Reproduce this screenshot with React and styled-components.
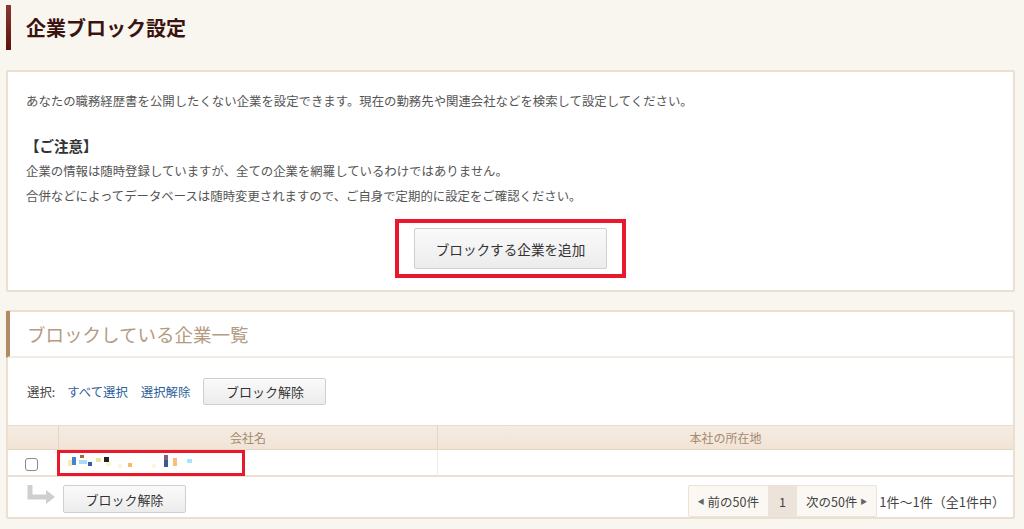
import React from 'react';
import styled, { createGlobalStyle } from 'styled-components';

const GlobalStyle = createGlobalStyle`
    body {
        margin: 0;
        background: #f9f6f0;
        font-family: "Noto Sans CJK JP", "Noto Sans", sans-serif;
        color: #555;
    }
`;

const Page = styled.div`
    padding: 5px 9px 0 6px;
    height: 529px;
    box-sizing: border-box;
    overflow: hidden;
`;

const Title = styled.h1`
    margin: 0;
    height: 45px;
    display: flex;
    align-items: center;
    padding-left: 15px;
    border-left: 5px solid #6e1d17;
    border-image: linear-gradient(#8a3a2e, #5a120e) 1;
    font-size: 20px;
    font-weight: bold;
    color: #3b1410;
`;

const Card = styled.section`
    background: #fff;
    border: 2px solid #eadfd0;
    border-radius: 2px;
    margin-top: ${props => props.top}px;
`;

const Intro = styled.div`
    padding: 17px 18px 12px;
    font-size: 12.4px;
    line-height: 25px;
`;

const Para = styled.p`
    margin: 0;
`;

const Notice = styled.h3`
    margin: 19px 0 0 -1px;
    font-size: 14.5px;
    font-weight: bold;
    color: #333;
    line-height: 26px;
`;

const Centered = styled.div`
    display: flex;
    justify-content: center;
    margin-top: 10px;
`;

const RedBox = styled.div`
    border: 4px solid #e8192c;
    padding: 5px 15px;
    display: flex;
    align-items: center;
`;

const Button = styled.button`
    font-family: inherit;
    font-size: ${props => props.size || 13}px;
    color: #333;
    background: linear-gradient(#fafafa, #ececec);
    border: 1px solid #cfcfcf;
    border-radius: 2px;
    width: ${props => props.w}px;
    height: ${props => props.h}px;
    padding: 0;
    cursor: pointer;
`;

const CardHead = styled.div`
    height: 45px;
    display: flex;
    align-items: center;
    padding-left: 17px;
    border-left: 4px solid #b08a60;
    margin-left: -2px;
    margin-top: -1px;
    border-bottom: 2px solid #f2ebe3;
    font-size: 18.5px;
    color: #b49b82;
`;

const Toolbar = styled.div`
    display: flex;
    align-items: center;
    gap: 13px;
    padding: 20px 19px 20px;
    font-size: 12.4px;
`;

const Label = styled.span`
    color: #444;
    margin-right: -1px;
`;

const Link = styled.a`
    color: #2d5f9a;
    text-decoration: none;
    cursor: pointer;
`;

const Table = styled.div`
    display: grid;
    grid-template-columns: 50px 379px 1fr;
    border-top: 1px solid #e9dccb;
`;

const HeadCell = styled.div`
    height: 23px;
    background: linear-gradient(#f5ece2, #f1e4d6);
    border-bottom: 1px solid #e6d7c4;
    border-left: ${props => (props.first ? 'none' : '1px solid #e6d7c4')};
    display: flex;
    align-items: center;
    justify-content: center;
    font-size: 12px;
    color: #a58a70;
`;

const Cell = styled.div`
    height: 25px;
    border-bottom: 2px solid #eadfd0;
    border-left: ${props => (props.first ? 'none' : '1px solid #f2ebe3')};
    display: flex;
    align-items: center;
    justify-content: ${props => (props.first ? 'center' : 'flex-start')};
    position: relative;
`;

const Check = styled.span`
    width: 11px;
    height: 11px;
    border: 1px solid #8a8a8a;
    border-radius: 3px;
    margin-left: -4px;
    margin-top: 3px;
`;

const Redacted = styled.div`
    position: absolute;
    left: -2px;
    top: 0;
    width: 182px;
    height: 20px;
    border: 3px solid #e8192c;
    display: flex;
    align-items: center;
`;

const Footer = styled.div`
    display: flex;
    align-items: flex-start;
    padding: 8px 0 0 19px;
    font-size: 12.5px;
`;

const Arrow = styled.svg`
    margin-top: -1px;
    margin-right: 6px;
`;

const Spacer = styled.div`
    flex: 1;
`;

const Pager = styled.div`
    display: flex;
    height: 30px;
    border: 1px solid #ece3d6;
    border-radius: 2px;
    background: #fbf8f3;
`;

const PageItem = styled.span`
    display: flex;
    align-items: center;
    gap: 3px;
    padding: 0 ${props => props.pad}px;
    background: ${props => (props.current ? '#ece4da' : 'transparent')};
    color: #444;
`;

const Tri = styled.span`
    font-size: 7px;
    color: #666;
`;

const Count = styled.span`
    margin: 7px 8px 0 2px;
    font-size: 13px;
    color: #444;
`;

const pixels = [
    [8, 8, 4, 6, '#fde7b4'], [12, 5, 4, 8, '#3d86d4'], [20, 3, 4, 3, '#a56a3a'],
    [19, 8, 8, 4, '#a8dcf7'], [28, 10, 4, 4, '#2b5fb0'], [36, 6, 5, 4, '#ece1a8'],
    [44, 5, 5, 5, '#222'], [46, 10, 5, 4, '#fef6d0'], [58, 12, 4, 4, '#fef6d6'],
    [68, 11, 4, 4, '#f9b86a'], [92, 12, 4, 4, '#fef6d6'], [104, 3, 4, 5, '#8a5a80'],
    [104, 8, 4, 7, '#355c9a'], [113, 6, 4, 8, '#f7c07a'], [127, 7, 5, 4, '#a8e4fa'],
];

export default function App() {
    return (
        <Page>
            <GlobalStyle />
            <Title>企業ブロック設定</Title>
            <Card top={20}>
                <Intro>
                    <Para>あなたの職務経歴書を公開したくない企業を設定できます。現在の勤務先や関連会社などを検索して設定してください。</Para>
                    <Notice>【ご注意】</Notice>
                    <Para>企業の情報は随時登録していますが、全ての企業を網羅しているわけではありません。</Para>
                    <Para>合併などによってデータベースは随時変更されますので、ご自身で定期的に設定をご確認ください。</Para>
                    <Centered>
                        <RedBox>
                            <Button w={193} h={41} size={13.6}>ブロックする企業を追加</Button>
                        </RedBox>
                    </Centered>
                </Intro>
            </Card>
            <Card top={18}>
                <CardHead>ブロックしている企業一覧</CardHead>
                <Toolbar>
                    <Label>選択:</Label>
                    <Link>すべて選択</Link>
                    <Link>選択解除</Link>
                    <Button w={123} h={27}>ブロック解除</Button>
                </Toolbar>
                <Table>
                    <HeadCell first />
                    <HeadCell>会社名</HeadCell>
                    <HeadCell>本社の所在地</HeadCell>
                    <Cell first>
                        <Check />
                    </Cell>
                    <Cell>
                        <Redacted>
                            <svg width="182" height="20" viewBox="0 0 182 20">
                                {pixels.map(([x, y, w, h, c], i) => (
                                    <rect key={i} x={x} y={y - 1} width={w} height={h} fill={c} />
                                ))}
                            </svg>
                        </Redacted>
                    </Cell>
                    <Cell />
                </Table>
                <Footer>
                    <Arrow width="30" height="22" viewBox="0 0 30 22">
                        <path d="M3 1 V13 H20" fill="none" stroke="#cfcfcf" strokeWidth="5" />
                        <path d="M19 6 L28 13 L19 20 Z" fill="#cfcfcf" />
                    </Arrow>
                    <Button w={123} h={28}>ブロック解除</Button>
                    <Spacer />
                    <Pager>
                        <PageItem pad={9}><Tri>◀</Tri>前の50件</PageItem>
                        <PageItem pad={11} current>1</PageItem>
                        <PageItem pad={9}>次の50件<Tri>▶</Tri></PageItem>
                    </Pager>
                    <Count>1件～1件（全1件中）</Count>
                </Footer>
            </Card>
        </Page>
    );
}
